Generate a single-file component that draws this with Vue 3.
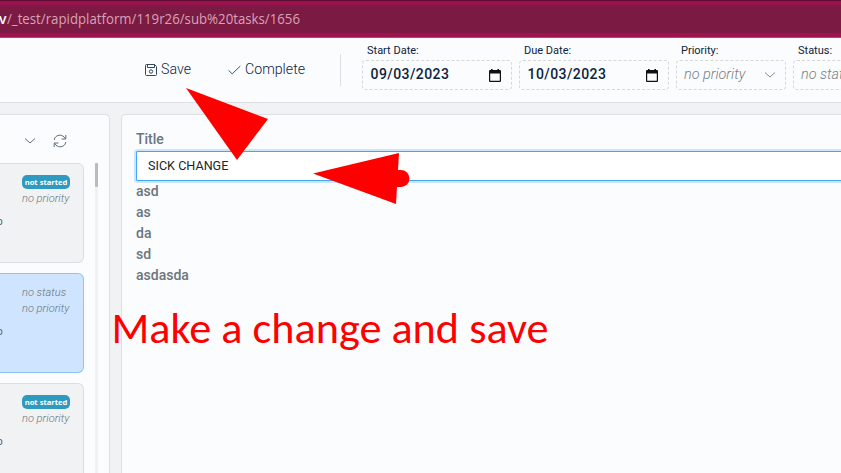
<script setup>
const dates = [
  { label: 'Start Date:', value: '09/03/2023' },
  { label: 'Due Date:', value: '10/03/2023' }
]
const selects = [
  { label: 'Priority:', value: 'no priority' },
  { label: 'Status:', value: 'no status' }
]
const cards = [
  { started: true, selected: false },
  { started: false, selected: true },
  { started: true, selected: false }
]
const lines = ['asd', 'as', 'da', 'sd', 'asdasda']
</script>

<template>
  <div class="screen">
    <div class="browser">
      <svg class="url" width="310" height="28">
        <text x="-1" y="19" class="host">v</text>
        <text x="7" y="19" class="path" textLength="293" lengthAdjust="spacingAndGlyphs">/_test/rapidplatform/119r26/sub%20tasks/1656</text>
      </svg>
    </div>
    <header class="toolbar">
      <div class="actions">
        <button class="action save">
          <svg width="14" height="14" viewBox="0 0 14 14">
            <path d="M1.500 2.500q0-1 1-1h8l2 2v8q0 1-1 1h-9q-1 0-1-1zM3.500 1.500v3h7v-3" />
            <circle cx="7" cy="8.500" r="1.700" />
          </svg>
          <span>Save</span>
        </button>
        <button class="action complete">
          <svg width="13" height="14" viewBox="0 0 13 14"><path d="M.6 7.400l3.600 3.500L12.300 3" /></svg>
          <span>Complete</span>
        </button>
      </div>
      <div class="fields">
        <div v-for="d in dates" :key="d.label" class="field date">
          <label>{{ d.label }}</label>
          <div class="box">
            <span>{{ d.value }}</span>
            <svg width="12" height="13" viewBox="0 0 12 13">
              <path d="M2 0h1.600v1h4.800V0H10v1h1q1 0 1 1v10q0 1-1 1H1q-1 0-1-1V2q0-1 1-1h1zM1.200 4.400v7.400h9.600V4.400z" fill-rule="evenodd" />
            </svg>
          </div>
        </div>
        <div v-for="s in selects" :key="s.label" class="field select">
          <label>{{ s.label }}</label>
          <div class="box">
            <em>{{ s.value }}</em>
            <svg width="12" height="8" viewBox="0 0 12 8"><path d="M1 1.500l5 4.500 5-4.500" /></svg>
          </div>
        </div>
      </div>
    </header>
    <main class="content">
      <aside class="side">
        <div class="side-tools">
          <svg width="12" height="8" viewBox="0 0 12 8"><path d="M1 1.500l5 4.500 5-4.500" /></svg>
          <svg width="14" height="14" viewBox="0 0 14 14">
            <path d="M1.200 6C1.500 3 4 1.200 6.800 1.200c2.400 0 4.200 1.200 5.500 3.400M12.800 1v4H8.600M12.800 8c-.3 3-2.800 4.800-5.600 4.800-2.400 0-4.200-1.200-5.500-3.400M1.200 13V9h4.200" />
          </svg>
        </div>
        <div class="list">
          <div class="cards">
            <article v-for="(c, i) in cards" :key="i" class="card" :class="{ selected: c.selected }">
              <div class="meta">
                <span v-if="c.started" class="badge">not started</span>
                <em v-else>no status</em>
                <em>no priority</em>
              </div>
              <div class="detail">o</div>
            </article>
          </div>
          <div class="track"><div class="thumb"></div></div>
        </div>
      </aside>
      <section class="editor">
        <div class="title">Title</div>
        <div class="input">SICK CHANGE</div>
        <div v-for="l in lines" :key="l" class="line">{{ l }}</div>
      </section>
    </main>
    <svg class="notes" width="841" height="473">
      <polygon points="186,88 268,119 237,160" />
      <polygon points="313,173.500 399,153 396,204" />
      <path d="M396 170h5a8.500 8.500 0 0 1 0 17h-5z" />
      <text x="111.500" y="343" textLength="437" lengthAdjust="spacingAndGlyphs">Make a change and save</text>
    </svg>
  </div>
</template>

<style>
body { margin: 0; overflow: hidden; }
</style>

<style scoped>
* { box-sizing: border-box; }
.screen { position: relative; width: 841px; height: 473px; overflow: hidden; display: flex; flex-direction: column; background: #f1f2f4; font-family: Roboto, sans-serif; color: #0c2340; }
.browser { height: 38px; flex: none; padding-top: 4px; background: #7b1a42; border-top: 1px solid #5c0d30; border-bottom: 1px solid #c13c70; box-shadow: inset 0 4px #9c1150, inset 0 -4px #a01350; }
.url { display: block; font: 14px "Open Sans", sans-serif; }
.host { fill: #fff; font-weight: 600; }
.path { fill: #d7a3b8; }
.toolbar { height: 65px; flex: none; display: flex; background: #fbfcfe; border-bottom: 1px solid #dddfe2; }
.actions { width: 341px; height: 32px; flex: none; margin-top: 16px; padding-left: 144px; display: flex; align-items: center; border-right: 1px solid #dddfe2; }
.action { display: flex; align-items: center; padding: 0; border: 0; background: none; font: 300 14.200px/20px Roboto, sans-serif; color: #0c2340; }
.action svg { flex: none; fill: none; stroke: #33475f; stroke-width: 1; }
.complete svg { stroke: #2d5a80; }
.side-tools svg, .select svg { fill: none; stroke: #5d6c7e; stroke-width: 1; }
.select svg { stroke: #858c94; }
.action span { position: relative; top: -1px; }
.save { gap: 3px; width: 84px; }
.complete { gap: 4px; }
.fields { display: flex; gap: 7px; padding: 6px 0 0 21px; }
.field label { display: block; height: 16px; padding-left: 5px; font-size: 11px; line-height: 13px; font-weight: 400; }
.box { height: 30px; display: flex; align-items: center; justify-content: space-between; border: 1px dashed #d5d8dc; border-radius: 4px; }
.date { width: 150px; flex: none; }
.date .box { padding: 0 10px 0 7.500px; font-size: 14px; font-weight: 500; letter-spacing: .42px; }
.date span { position: relative; top: -1px; }
.date svg { fill: #111; }
.select { width: 110px; flex: none; }
.select .box { padding: 0 9px 0 7px; font-size: 14.400px; font-weight: 300; color: #777e87; }
.select em { position: relative; top: -1px; white-space: nowrap; }
.content { flex: 1; min-height: 0; display: flex; gap: 11px; padding-top: 11px; }
.side { width: 110px; flex: none; background: #fbfcfe; border: 1px solid #dddfe2; border-width: 1px 1px 0 0; border-top-right-radius: 5px; }
.side-tools { height: 48px; display: flex; align-items: center; gap: 17px; padding: 3px 0 0 24px; }
.list { height: 311px; display: flex; gap: 11px; overflow: hidden; }
.cards { width: 84px; display: flex; flex-direction: column; gap: 10px; }
.card { height: 100px; flex: none; padding-top: 11px; background: #f1f2f4; border: 1px solid #dcdee1; border-left: 0; border-radius: 0 6px 6px 0; }
.card.selected { background: #cfe5ff; border-color: #8fc3f2; }
.meta { height: 33px; padding-left: 22px; display: flex; flex-direction: column; align-items: flex-start; }
.meta em { font-size: 11.100px; line-height: 16px; font-weight: 300; font-family: Roboto, sans-serif; color: #6b727a; white-space: nowrap; }
.badge { width: 48px; height: 14px; margin-bottom: 2px; border-radius: 5px; background: #2f9abf; color: #fff; font: 700 7.600px/14px "Open Sans", sans-serif; text-align: center; white-space: nowrap; }
.detail { margin: 8px 0 0 -3px; font-size: 10px; line-height: 12px; color: #555d66; }
.track { width: 3px; background: #f0f1f3; }
.thumb { height: 24px; background: #b9bbbe; border-radius: 1px; }
.editor { flex: 1; padding: 14px 0 0 14px; background: #fbfcfe; border: 1px solid #dddfe2; border-width: 1px 0 0 1px; border-top-left-radius: 5px; font-size: 14px; font-weight: 500; line-height: 21px; color: #6c757d; }
.title { height: 22px; }
.input { height: 30px; padding-left: 11px; background: #fff; border: 1px solid #42a5f5; border-right: 0; border-radius: 2px 0 0 2px; box-shadow: 0 0 0 2px #cae5fc; color: #212529; font-size: 12.600px; font-weight: 400; line-height: 28px; }
.notes { position: absolute; inset: 0; fill: #f00; pointer-events: none; font: 43px Carlito, "Open Sans", sans-serif; }
</style>
